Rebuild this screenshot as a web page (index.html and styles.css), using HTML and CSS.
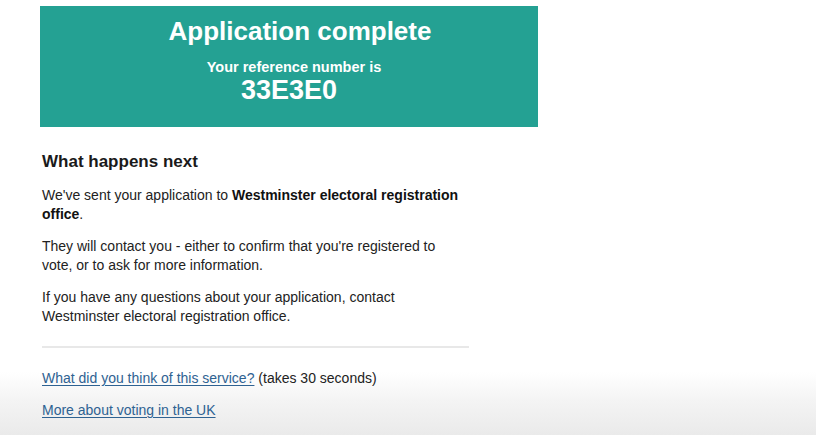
FILE: index.html
```html
<!DOCTYPE html>
<html lang="en">
<head>
<meta charset="utf-8">
<title>Application complete</title>
<link rel="stylesheet" href="styles.css">
</head>
<body>
<main class="page">
  <div class="panel">
    <h1 class="panel-title">Application complete</h1>
    <div class="panel-body">
      <span class="panel-label">Your reference number is</span>
      <strong class="panel-ref">33E3E0</strong>
    </div>
  </div>
  <div class="column">
    <h2 class="heading">What happens next</h2>
    <p class="body">We've sent your application to <strong>Westminster electoral registration office</strong>.</p>
    <p class="body">They will contact you - either to confirm that you're registered to vote, or to ask for more information.</p>
    <p class="body">If you have any questions about your application, contact Westminster electoral registration office.</p>
    <hr class="divider">
    <p class="body links"><a href="#" class="link">What did you think of this service?</a> (takes 30 seconds)</p>
    <p class="body links"><a href="#" class="link">More about voting in the UK</a></p>
  </div>
</main>
</body>
</html>
```

FILE: styles.css
```css
html, body {
  margin: 0;
  padding: 0;
}
body {
  width: 816px;
  height: 435px;
  overflow: hidden;
  font-family: "Liberation Sans", Arial, sans-serif;
  color: #1a1a1a;
  background: linear-gradient(to bottom, #ffffff 0, #ffffff 372px, #f4f4f4 400px, #eaeaea 435px);
}
.page {
  padding: 6px 0 0 40px;
}
.panel {
  box-sizing: border-box;
  width: 498px;
  height: 121px;
  background: #24a193;
  color: #ffffff;
  text-align: center;
  padding-top: 10px;
}
.panel-title {
  margin: 0;
  padding-left: 22px;
  font-size: 26px;
  line-height: 30px;
  font-weight: 700;
}
.panel-body {
  margin-top: 13px;
  display: flex;
  flex-direction: column;
  align-items: center;
}
.panel-label {
  padding-left: 10px;
  font-size: 14.5px;
  line-height: 17px;
  font-weight: 700;
}
.panel-ref {
  font-size: 27px;
  line-height: 28px;
  font-weight: 700;
}
.column {
  width: 427px;
  padding-left: 2px;
  padding-top: 24px;
}
.heading {
  margin: 0 0 13px;
  font-size: 17px;
  line-height: 22px;
  font-weight: 700;
}
.body {
  margin: 0 0 13px;
  font-size: 14px;
  line-height: 19px;
  color: #222;
}
.body strong {
  color: #111;
}
.divider {
  margin: 20px 0 21px;
  border: 0;
  height: 2px;
  background: #e8e8e8;
}
.links {
  margin-bottom: 13px;
}
.link {
  color: #2e6292;
  text-decoration: underline;
  text-underline-offset: 2px;
}
```
